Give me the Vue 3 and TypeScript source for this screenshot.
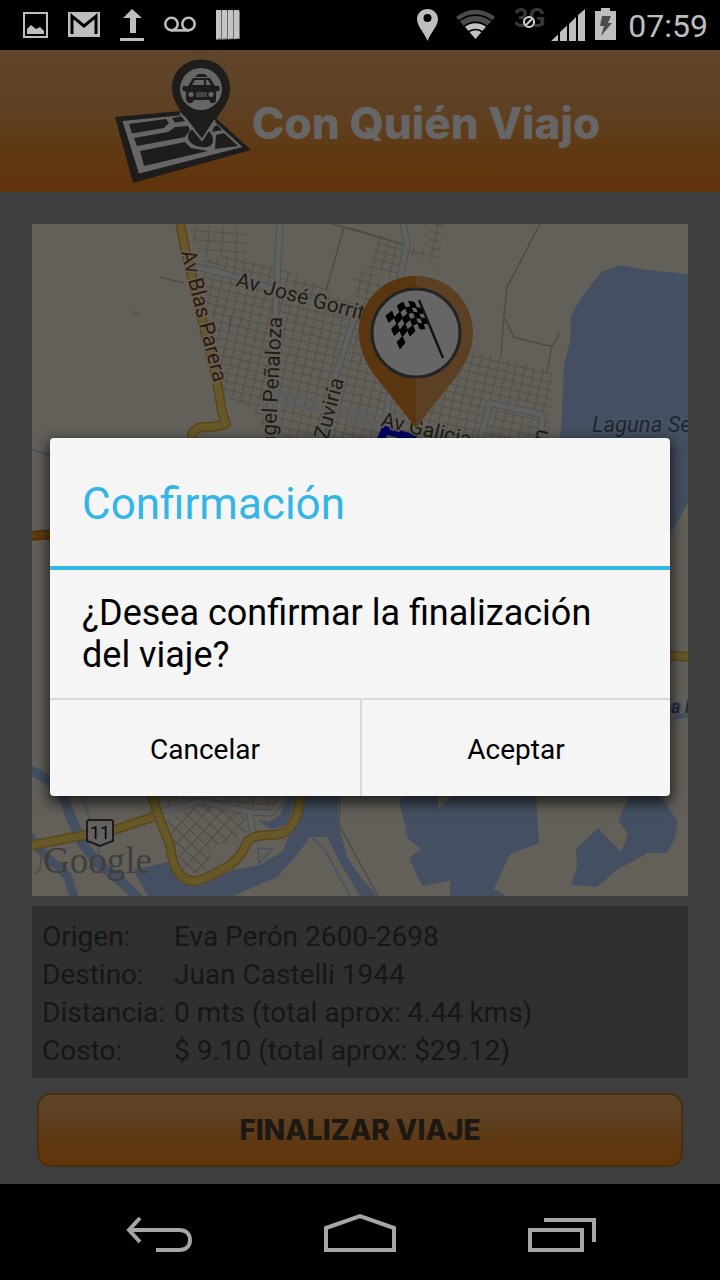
<script setup lang="ts">
import { ref } from 'vue'

interface TripRow {
  label: string
  value: string
}

const trip: TripRow[] = [
  { label: 'Origen:', value: 'Eva Perón 2600-2698' },
  { label: 'Destino:', value: 'Juan Castelli 1944' },
  { label: 'Distancia:', value: '0 mts (total aprox: 4.44 kms)' },
  { label: 'Costo:', value: '$ 9.10 (total aprox: $29.12)' },
]

const dialogOpen = ref(true)

// Checkered flag: a waving quad split in cells, alternate cells are filled.
const COLS = 6
const ROWS = 5
function flagPoint(u: number, v: number): string {
  const x = 386 + 34 * u + v * (14 - 4 * u)
  const y = 312 - 12 * u + v * (33 - 8 * u) - 4 * Math.sin(u * Math.PI * 1.7 - 1.2)
  return `${x.toFixed(1)},${y.toFixed(1)}`
}
const flagCells: string[] = []
for (let c = 0; c < COLS; c++) {
  for (let r = 0; r < ROWS; r++) {
    if ((c + r) % 2 === 0) {
      flagCells.push(
        [
          flagPoint(c / COLS, r / ROWS),
          flagPoint((c + 1) / COLS, r / ROWS),
          flagPoint((c + 1) / COLS, (r + 1) / ROWS),
          flagPoint(c / COLS, (r + 1) / ROWS),
        ].join(' '),
      )
    }
  }
}
</script>

<template>
  <div class="screen">
    <div class="status">
      <div class="status-left">
        <svg class="ic" width="26" height="50" viewBox="22 0 26 50" aria-hidden="true">
          <rect x="24" y="13" width="23" height="24" fill="none" stroke="#bebebe" stroke-width="2" />
          <path d="M27 34V29L31 25L36 29L40 27L44 31V34Z" fill="#bebebe" />
        </svg>
        <svg class="ic" width="32" height="50" viewBox="68 0 32 50" aria-hidden="true">
          <rect x="68" y="12" width="32" height="25" fill="#bebebe" />
          <path d="M72 34V16L84 26L96 16V34" fill="none" stroke="#000" stroke-width="3" />
          <path d="M71 13.500L84 23.500L97 13.500Z" fill="#bebebe" />
        </svg>
        <svg class="ic" width="24" height="50" viewBox="120 0 24 50" aria-hidden="true">
          <path d="M132 9L142 18H136V33H130V18H123ZM120 38H144V41H120Z" fill="#bebebe" />
        </svg>
        <svg class="ic" width="32" height="50" viewBox="164 0 32 50" aria-hidden="true">
          <g fill="none" stroke="#bebebe" stroke-width="2.600">
            <circle cx="171.500" cy="24" r="6.200" />
            <circle cx="188.500" cy="24" r="6.200" />
            <path d="M171 30.400H189" />
          </g>
        </svg>
        <svg class="ic" width="24" height="50" viewBox="216 0 24 50" aria-hidden="true">
          <path d="M217 11H240V39L216 40Z" fill="#6c6c6c" />
          <path d="M216 10H221V38L216 39ZM222 10H227V38L222 39ZM228 10H233V38L228 39ZM234 10H239V38L234 39Z" fill="#c4c4c4" />
        </svg>
      </div>
      <div class="status-right">
        <svg class="ic" width="21" height="50" viewBox="416 0 21 50" aria-hidden="true">
          <path fill-rule="evenodd" d="M426.500 9C420.500 9 416 13.500 416 19C416 26 423 32 426.500 41C430 32 437 26 437 19C437 13.500 432.500 9 426.500 9ZM426.500 14A4 4 0 1 1 426.500 22A4 4 0 1 1 426.500 14Z" fill="#bebebe" />
        </svg>
        <svg class="ic" width="40" height="50" viewBox="455 0 40 50" aria-hidden="true">
          <path d="M474.500 39L455 17A30 30 0 0 1 494 17Z" fill="#4b4b4b" />
          <path d="M474.500 39L464 26.500A17 17 0 0 1 485 26.500Z" fill="#c2c2c2" />
          <g fill="none" stroke="#000" stroke-width="1.600">
            <path d="M458 21A26 26 0 0 1 491 21" />
            <path d="M463 26.500A18 18 0 0 1 486 26.500" />
            <path d="M467 32.500A11 11 0 0 1 482 32.500" />
          </g>
        </svg>
        <svg class="ic" width="71" height="50" viewBox="514 0 71 50" aria-hidden="true">
          <text x="514" y="27" class="net">3G</text>
          <circle cx="529" cy="22" r="5" fill="#000" stroke="#d4d4d4" stroke-width="2" />
          <path d="M526 25L532 19" stroke="#d4d4d4" stroke-width="2" />
          <path d="M551 41L558 34.500V41ZM560 32L567 25.500V41H560ZM569 24L576 17V41H569ZM578 15L585 9V41H578Z" fill="#bebebe" />
        </svg>
        <div class="power">
          <svg class="ic" width="21" height="50" viewBox="595 0 21 50" aria-hidden="true">
            <path d="M601 8H610V11H616V40H595V11H601Z" fill="#bebebe" />
            <path d="M602 16H611L608 23H612L601 36L604 26H600Z" fill="#4a4a4a" />
          </svg>
          <time class="clock">07:59</time>
        </div>
      </div>
    </div>

    <div class="app">
      <header class="brand">
        <svg class="ic" width="138" height="142" viewBox="116 50 138 142" aria-hidden="true">
          <path d="M117 117L183 111L218 118L253 150L135 183Z" fill="#4e4846" />
          <path d="M124.500 121L181 115.500L216 121L244.500 147L141 173.500Z" fill="#fff" />
          <g fill="#4e4846">
            <path d="M131 124L168 119L171 123L166 128L134 133.500Z" />
            <path d="M174 118L185 116L188 121L177 122.500Z" />
            <path d="M136 138L170 132L177 127L190 126L192 130L187 137L139 146Z" />
            <path d="M142 151L187 142L193 148L210 151L146 166Z" />
            <path d="M190 137C190 130 196 128 203 128C211 128 215 135 215 140C215 147 208 148 203 147C196 146 190 142 190 137Z" />
            <path d="M216 127L219 125L224 130L214 132Z" />
            <path d="M218 135L226 133L240 146L217 149Z" />
          </g>
          <path d="M203 59.500C186 59.500 174 72 174 88C174 105 186 112 204 140C221 112 232 105 232 88C232 72 220 59.500 203 59.500Z" fill="#4e4846" />
          <path d="M182 113L204 140L217 120" fill="none" stroke="#fff" stroke-width="2" />
          <circle cx="203" cy="89" r="21" fill="#fff" />
          <g fill="#4e4846">
            <path d="M197 77L200 74H207L210 77ZM190 86L195 78H212L217 86Z" />
            <path d="M185 86H221L222 90L218 92V100L217 103H213L211 100H196L194 103H190L188 100V92L184 90Z" />
          </g>
          <path d="M194 85L197 80H206V85ZM208 80H210L213 85H208Z" fill="#fff" />
          <circle cx="193" cy="94.500" r="2.500" fill="#fff" />
          <circle cx="213" cy="94.500" r="2.500" fill="#fff" />
          <rect x="198" y="92" width="11" height="5" fill="#aaa" />
        </svg>
        <h1 class="title">Con Quién Viajo</h1>
      </header>

      <main class="content">
        <svg class="map" viewBox="32 224 656 672" preserveAspectRatio="xMidYMid slice" role="img" aria-label="Mapa del viaje">
          <defs>
            <pattern id="blocks" width="9" height="8" patternUnits="userSpaceOnUse" patternTransform="rotate(13)">
              <path d="M0 0H9M0 0V8" stroke="#cdc3b6" stroke-width="2" fill="none" />
            </pattern>
            <pattern id="blocksWide" width="14" height="9" patternUnits="userSpaceOnUse" patternTransform="rotate(4)">
              <path d="M0 0H14M0 0V9" stroke="#cdc3b6" stroke-width="1.800" fill="none" />
            </pattern>
            <pattern id="blocksTilt" width="11" height="9" patternUnits="userSpaceOnUse" patternTransform="rotate(43)">
              <path d="M0 0H11M0 0V9" stroke="#c4baae" stroke-width="2.200" fill="none" />
            </pattern>
          </defs>
          <rect x="32" y="224" width="656" height="672" fill="#f8efe0" />

          <!-- water -->
          <g fill="#abc9f3">
            <path d="M620 265L601 272L583 295L571 315L570 341L564 365L561 428L556 470L600 560L670 535L688 503V274L647 270Z" />
            <path d="M399 800L408 839L421 849L409 858L422 886L450 881V896H506L494 889L510 854L539 843L536 790H458L438 809V790L412 794Z" />
            <path d="M598 828L621 852L628 834L618 820L632 790H655L678 821L675 838L667 853H648L618 869L597 887L571 885L577 867L576 849Z" />
            <path d="M133 870L167 862L178 878L200 886L233 870L260 865L283 851L293 823L309 785H338V823L347 857L360 876L377 896H360L342 866L327 837H310L297 855L277 877L233 896H148Z" />
            <path d="M258 820L270 821L280 815L288 796H297L287 824L275 829L268 828Z" />
            <path d="M670 723L676 715L688 712V718L677 719Z" />
          </g>
          <g fill="none" stroke="#abc9f3">
            <path d="M28 770Q52 778 63 796L72 820L82 843L97 863L120 880L140 900" stroke-width="10" />
            <path d="M28 835L47 857L67 875L75 900" stroke-width="9" />
            <path d="M32 450L50 455M82 796L90 820L98 850L101 862M312 838L325 850L350 896M258 848L259 863L272 849Z" stroke-width="1.400" />
          </g>
          <path d="M131 311H138L139 315H132Z" fill="#d8dce6" />

          <!-- neighbourhoods -->
          <path d="M188 224L240 228L246 233V257H200Z" fill="url(#blocksWide)" />
          <path d="M203 260L235 255L298 275L330 290L362 306V438H270L250 408L223 396L216 330L206 300Z" fill="url(#blocks)" />
          <path d="M380 235L402 245L398 280L368 270ZM410 246L428 250L424 258L408 256ZM430 224H444L438 266L428 262ZM352 280L372 262L385 300L362 312Z" fill="url(#blocks)" />
          <path d="M360 350L390 380L416 427L470 350L552 370L553 400L547 438H430L360 438Z" fill="url(#blocks)" />
          <path d="M166 822L198 803L244 812L248 832L212 848L205 876L183 870Z" fill="url(#blocksTilt)" />
          <path d="M158 796H282L272 812L250 810L205 800L170 808Z" fill="url(#blocksWide)" />
          <g fill="none" stroke="#c4baae" stroke-width="1.500">
            <path d="M540 224L507 287L504 315L501 356M504 317L514 337L545 345L552 346L557 339L559 332M552 346L547 372" />
            <path d="M344 227L326 291M332 224L395 242M159 277L184 283M350 228L402 244M231 315L229 330M340 796L339 825L378 896M34 850L42 852L40 870L34 874" />
          </g>
          <g fill="none" stroke="#c9c6c6" stroke-width="7" stroke-linejoin="round">
            <path d="M280 224L277 282L275 318L268 440M197 267L237 277L362 318M357 310L335 378L320 440M403 224L407 245L398 285M393 380L385 420" />
            <path d="M480 440L490 403L543 415L539 440M150 815L200 801L250 812L272 813L284 796M250 812L252 830L259 842" />
          </g>
          <g fill="none" stroke="#f4f3f3" stroke-width="5" stroke-linejoin="round">
            <path d="M280 224L277 282L275 318L268 440M197 267L237 277L362 318M357 310L335 378L320 440M403 224L407 245L398 285M393 380L385 420" />
            <path d="M480 440L490 403L543 415L539 440M150 815L200 801L250 812L272 813L284 796M250 812L252 830L259 842" />
          </g>
          <g fill="none" stroke="#e6e5e5" stroke-width="4">
            <path d="M272 392L390 418M272 400L390 426" />
          </g>

          <!-- main roads -->
          <g fill="none" stroke="#e0b040" stroke-width="10" stroke-linejoin="round">
            <path d="M180 222L185 248L217 382L222 412L226 424L212 427Q190 425 192 440" />
            <path d="M28 846L80 836L117 829L153 817M150 790L160 820L170 845Q174 882 195 881Q203 881 230 865Q242 856 247 842Q252 835 270 835Q286 836 293 823Q300 812 301 790M665 655L690 657" />
          </g>
          <g fill="none" stroke="#ffdc66" stroke-width="7" stroke-linejoin="round">
            <path d="M180 222L185 248L217 382L222 412L226 424L212 427Q190 425 192 440" />
            <path d="M28 846L80 836L117 829L153 817M150 790L160 820L170 845Q174 882 195 881Q203 881 230 865Q242 856 247 842Q252 835 270 835Q286 836 293 823Q300 812 301 790M665 655L690 657" />
          </g>
          <path d="M30 536L55 534" fill="none" stroke="#d08010" stroke-width="10" />
          <path d="M30 536L55 534" fill="none" stroke="#f29a28" stroke-width="6" />

          <path d="M380 442L385 430L416 439" fill="none" stroke="#00f" stroke-width="8" />

          <!-- labels -->
          <text class="road brown" transform="translate(181 252) rotate(76)">Av Blas Parera</text>
          <text class="road" transform="translate(235 286) rotate(15)">Av José Gorriti</text>
          <text class="road end" transform="translate(282 317) rotate(-87)">Angel Peñaloza</text>
          <text class="road end" transform="translate(344 380) rotate(-75)">Zuviría</text>
          <text class="road" transform="translate(380 426) rotate(13)">Av Galicia</text>
          <text class="road" transform="translate(546 442) rotate(-78)">n</text>
          <text class="water" x="592" y="432">Laguna Se</text>
          <text class="water small" x="671" y="713">a R</text>

          <path d="M89 820H111Q113 820 113 822V841Q109 842 100 846Q91 842 87 841V822Q87 820 89 820Z" fill="#f4f2f0" stroke="#4a4a4a" stroke-width="2" />
          <text class="shield" x="100" y="839">11</text>
          <text class="google" x="43" y="873">Google</text>

          <!-- destination pin -->
          <path d="M416 276C384 276 359 301 359 333C359 350 367 363 373 373L416 428L459 373C465 363 473 350 473 333C473 301 448 276 416 276Z" fill="#e3a15b" />
          <path d="M416 276C384 276 359 301 359 333C359 350 367 363 373 373L416 428Z" fill="#df8729" />
          <circle cx="416" cy="333" r="44" fill="#fff" stroke="#5a5a5a" stroke-width="3" />
          <polygon v-for="(cell, i) in flagCells" :key="i" :points="cell" fill="#000" stroke="#000" stroke-width="1" stroke-linejoin="round" />
          <path d="M419 300L443 358" stroke="#333" stroke-width="2.500" fill="none" />
        </svg>

        <table class="trip">
          <tbody>
            <tr v-for="row in trip" :key="row.label">
              <th scope="row">{{ row.label }}</th>
              <td>{{ row.value }}</td>
            </tr>
          </tbody>
        </table>

        <button type="button" class="finish" @click="dialogOpen = true">FINALIZAR VIAJE</button>
      </main>

      <div v-if="dialogOpen" class="scrim">
        <section class="dialog" role="dialog" aria-modal="true" aria-labelledby="dialog-title">
          <h2 id="dialog-title" class="dialog-title">Confirmación</h2>
          <p class="message">¿Desea confirmar la finalización del viaje?</p>
          <div class="actions">
            <button type="button" @click="dialogOpen = false">Cancelar</button>
            <button type="button" @click="dialogOpen = false">Aceptar</button>
          </div>
        </section>
      </div>
    </div>

    <nav class="navbar">
      <button type="button" aria-label="Atrás">
        <svg width="72" height="48" viewBox="123 1208 72 48" fill="none" stroke="#a6a6a6" stroke-width="4">
          <path d="M157 1250H180C187 1250 191 1246 191 1240C191 1234 187 1230 180 1230H130" />
          <path d="M141 1218L130 1230L141 1242" />
        </svg>
      </button>
      <button type="button" aria-label="Inicio">
        <svg width="76" height="48" viewBox="322 1208 76 48" fill="none" stroke="#a6a6a6" stroke-width="4">
          <path d="M326 1250V1228L360 1216L394 1228V1250Z" />
        </svg>
      </button>
      <button type="button" aria-label="Recientes">
        <svg width="72" height="48" viewBox="526 1208 72 48" fill="none" stroke="#a6a6a6" stroke-width="4">
          <path d="M530 1230H582V1250H530ZM544 1220H594V1242" />
        </svg>
      </button>
    </nav>
  </div>
</template>

<style>
body {
  margin: 0;
  background: #000;
}
</style>

<style scoped>
.screen {
  display: flex;
  flex-direction: column;
  min-height: 100vh;
  font-family: Roboto, "Liberation Sans", sans-serif;
}
.ic {
  display: block;
  flex: none;
}
.status {
  display: flex;
  justify-content: space-between;
  height: 50px;
  padding: 0 12px 0 22px;
  background: #000;
}
.status-left {
  display: flex;
  gap: 20px;
}
.status-right {
  display: flex;
  gap: 18px;
}
.power {
  display: flex;
  gap: 12px;
  margin-left: -8px;
}
.net {
  font: 700 25px Roboto, sans-serif;
  fill: #383838;
}
.clock {
  color: #bebebe;
  font-size: 32px;
  line-height: 52px;
}
.app {
  position: relative;
  flex: 1;
  display: flex;
  flex-direction: column;
  background: #9b9b9b;
}
.brand {
  display: flex;
  justify-content: center;
  align-items: center;
  height: 142px;
  padding-right: 6px;
  background: linear-gradient(#edac6b, #eba35a 40%, #f18a28 80%, #f0841e);
}
.title {
  margin: 0;
  padding-top: 4px;
  color: #fff;
  font: 800 44px/48px Inter, "Open Sans", sans-serif;
  white-space: nowrap;
}
.content {
  flex: 1;
  display: flex;
  flex-direction: column;
  padding: 32px 32px 16px;
}
.map {
  display: block;
  width: 100%;
  aspect-ratio: 656 / 672;
}
.road {
  font-size: 21px;
  fill: #4f4a38;
  stroke: #f8efe0;
  stroke-width: 3px;
  paint-order: stroke;
}
.brown {
  fill: #7a4210;
}
.end {
  text-anchor: end;
}
.water {
  font-size: 22px;
  font-style: italic;
  fill: #46607f;
  stroke: #b9d0f2;
  stroke-width: 3px;
  paint-order: stroke;
}
.small {
  font-size: 18px;
}
.shield {
  font-size: 18px;
  text-anchor: middle;
  fill: #111;
}
.google {
  font: 37px "Liberation Serif", serif;
  fill: #a09b94;
}
.trip {
  display: block;
  margin-top: 10px;
  padding: 12px 10px 8px;
  background: #787878;
  color: #3a3a3a;
  border-spacing: 0;
  font-size: 28px;
  line-height: 38px;
}
.trip th,
.trip td {
  padding: 0;
  text-align: left;
  font-weight: 400;
}
.trip th {
  width: 132px;
}
.finish {
  height: 74px;
  margin: 15px 5px 0;
  padding: 0;
  border: 2px solid #b8701f;
  border-radius: 14px;
  background: linear-gradient(#edac6b, #eba35a 30%, #f18a28 75%, #f0841e);
  color: #4a3e34;
  font: 800 28px Inter, "Open Sans", sans-serif;
}
.scrim {
  position: absolute;
  inset: 0;
  display: grid;
  align-items: center;
  padding: 0 50px;
  background: rgba(0, 0, 0, 0.6);
}
.dialog {
  border-radius: 4px;
  background: #f5f5f5;
  box-shadow: 0 5px 14px 2px rgba(0, 0, 0, 0.7);
  overflow: hidden;
}
.dialog-title {
  margin: 0;
  padding: 4px 32px 0;
  border-bottom: 4px solid #33b5e5;
  color: #33b5e5;
  font-size: 44px;
  font-weight: 400;
  line-height: 124px;
}
.message {
  margin: 0;
  padding: 22px 32px 22px;
  color: #000;
  font-size: 36px;
  line-height: 42px;
}
.actions {
  display: grid;
  grid-template-columns: 1fr 1fr;
  border-top: 2px solid #d9d9d9;
}
.actions button {
  height: 96px;
  padding: 2px 0 0;
  border: 0;
  background: none;
  color: #000;
  font: 28px Roboto, "Liberation Sans", sans-serif;
}
.actions button + button {
  border-left: 2px solid #d9d9d9;
}
.navbar {
  display: flex;
  justify-content: center;
  gap: 128px;
  height: 96px;
  align-items: center;
  background: #000;
}
.navbar button {
  padding: 0;
  border: 0;
  background: none;
}
.navbar svg {
  display: block;
}
</style>
